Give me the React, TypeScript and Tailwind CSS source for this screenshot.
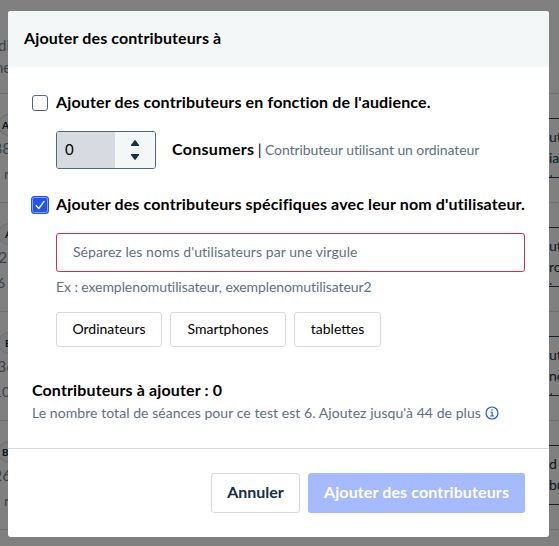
const tableRows = [
  { badge: 'A', badgePad: 'pl-[3px]', badgeEdge: '-ml-0.5', count: '38', countPad: '-ml-[7px]', note: 'r', notePad: 'pl-1', lines: ['ute', 'iau', 'tu'] },
  { badge: 'A', badgePad: 'pl-[6px]', badgeEdge: '-ml-0.5', count: '28', countPad: '-ml-0.5', note: '6', notePad: '-ml-[3px]', lines: ['ute', 'rou', 'i'] },
  { badge: 'B', badgePad: 'pl-[6px]', badgeEdge: '-ml-0.5', count: '36', countPad: '-ml-[3px]', note: '10', notePad: '-ml-1.5', lines: ['ute', 'nou', 'tu'] },
  { badge: 'B', badgePad: 'pl-[3px]', badgeEdge: '-ml-0.5', count: '26', countPad: '-ml-[7px]', note: 'r', notePad: 'pl-1', lines: ['d c', 'bu', ''] },
]

function TablePage() {
  return (
    <div className="h-full overflow-hidden bg-[#808080] text-[#3a444f]">
      <div className="h-[93px] pt-[34px] text-[15px] leading-[22px]">
        <div className="-ml-0.5">di</div>
        <div className="-ml-[5px]">ne</div>
      </div>
      {tableRows.map((row, index) => (
        <div key={index} className="flex h-[109px] justify-between border-t border-[#6c6d70]">
          <div className="w-2 overflow-hidden whitespace-nowrap pt-5">
            <div className={`h-[22px] w-10 rounded-full border border-[#6c6d70] bg-[#7a7c7e] ${row.badgeEdge}`}>
              <div className={`text-[10px] font-black leading-5 text-[#0c1722] ${row.badgePad}`}>{row.badge}</div>
            </div>
            <div className={`text-base leading-6 ${row.countPad}`}>{row.count}</div>
            <div className={`pt-1 text-sm leading-5 ${row.notePad}`}>{row.note}</div>
          </div>
          <div className="w-2.5 overflow-hidden whitespace-nowrap pt-6">
            <div className="h-[60px] w-5 overflow-hidden border-y border-[#17212d] pt-[7px] text-sm leading-[21px] text-[#0c1722]">
              {row.lines.map((line) => (
                <div key={line}>{line}</div>
              ))}
            </div>
          </div>
        </div>
      ))}
      <div className="border-t border-[#6c6d70]" />
    </div>
  )
}

function CheckIcon() {
  return (
    <svg className="size-[18px] shrink-0" viewBox="0 0 18 18" fill="none">
      <rect width="18" height="18" rx="3.5" fill="#2152f5" />
      <rect x="1.5" y="1.5" width="15" height="15" rx="2" stroke="#8ba4fb" />
      <path d="M5.2 9.6 7.8 12.6 13 5.4" stroke="#fff" strokeWidth="1.4" strokeLinecap="round" strokeLinejoin="round" />
    </svg>
  )
}

function InfoIcon() {
  return (
    <svg className="size-3.5 text-[#2152f5]" viewBox="0 0 14 14" fill="none" stroke="currentColor">
      <circle cx="7" cy="7" r="6" strokeWidth="1.2" />
      <path d="M5.6 6.2H7.2V10M5.3 10H8.9" strokeWidth="1.1" />
      <circle cx="7" cy="4" r=".8" fill="currentColor" stroke="none" />
    </svg>
  )
}

function NumberStepper() {
  return (
    <div className="flex h-[38px] w-[100px] overflow-hidden rounded-[3px] border border-[#536480]">
      <div className="flex w-[58px] items-center bg-[#d7dae0] pb-px pl-2 text-[15px]">0</div>
      <div className="flex flex-1 flex-col items-center justify-center gap-2 bg-[#f3f7f8] text-[#16304a]">
        <svg className="h-1.5 w-2" viewBox="0 0 8 6" fill="currentColor">
          <path d="M3.4.4a.8.8 0 0 1 1.2 0L8 5v1H0V5z" />
        </svg>
        <svg className="h-1.5 w-2" viewBox="0 0 8 6" fill="currentColor">
          <path d="M3.4 5.6a.8.8 0 0 0 1.2 0L8 1V0H0v1z" />
        </svg>
      </div>
    </div>
  )
}

function DeviceButton({ label, width }: { label: string; width: string }) {
  return (
    <button type="button" className={`h-[35px] rounded-[3px] border border-[#d7dae0] pb-0.5 text-sm ${width}`}>
      {label}
    </button>
  )
}

function ContributorsModal() {
  return (
    <div className="absolute left-2 top-[11px] flex h-[526px] w-[541px] flex-col overflow-hidden rounded-[3px] bg-white text-black">
      <header className="flex h-14 items-center bg-[#f3f7f8] px-4 pb-0.5">
        <h2 className="text-base font-bold tracking-[0.12px]">Ajouter des contributeurs à</h2>
      </header>

      <div className="flex flex-1 flex-col px-6 pt-6">
        <label className="flex h-6 items-center gap-2">
          <span className="size-4 rounded-[3px] border border-[#536480]" />
          <span className="whitespace-nowrap pb-0.5 text-base font-bold tracking-[0.14px]">
            Ajouter des contributeurs en fonction de l'audience.
          </span>
        </label>

        <div className="mt-4 flex items-center gap-4 pl-6">
          <NumberStepper />
          <div className="whitespace-nowrap pb-0.5 text-sm tracking-[-0.1px] text-[#5f6f85]">
            <span className="text-base font-bold tracking-[0.3px] text-black">Consumers</span>{' '}
            <span className="text-[15px] text-black">|</span> Contributeur utilisant un ordinateur
          </div>
        </div>

        <label className="mt-6 flex h-6 items-center gap-[7px]">
          <span className="-ml-px">
            <CheckIcon />
          </span>
          <span className="whitespace-nowrap pb-0.5 text-base font-bold tracking-[0.14px]">
            Ajouter des contributeurs spécifiques avec leur nom d'utilisateur.
          </span>
        </label>

        <div className="mt-4 pl-6">
          <div className="flex h-[39px] items-center rounded-[3px] border border-[#db2a4a] px-4 pb-0.5 text-sm tracking-[0.07px] text-[#5f6f85]">
            Séparez les noms d'utilisateurs par une virgule
          </div>
          <p className="mt-[5px] text-sm leading-5 tracking-[-0.08px] text-[#5f6f85]">
            Ex : exemplenomutilisateur, exemplenomutilisateur2
          </p>
          <div className="mt-[15px] flex gap-2">
            <DeviceButton label="Ordinateurs" width="w-[106px]" />
            <DeviceButton label="Smartphones" width="w-[116px]" />
            <DeviceButton label="tablettes" width="w-[87px]" />
          </div>
        </div>

        <div className="mt-[31px] text-base font-bold leading-6 tracking-[0.13px]">Contributeurs à ajouter : 0</div>
        <div className="flex items-center gap-1 whitespace-nowrap text-sm leading-[22px] tracking-[0.06px] text-[#5f6f85]">
          Le nombre total de séances pour ce test est 6. Ajoutez jusqu'à 44 de plus
          <InfoIcon />
        </div>
      </div>

      <footer className="flex h-[89px] items-start justify-end gap-2 border-t border-[#d7dae0] px-6 pt-6">
        <button type="button" className="h-10 w-[89px] rounded-[3px] border border-[#d7dae0] pb-0.5 text-base font-bold text-[#16304a]">
          Annuler
        </button>
        <button
          type="button"
          className="h-10 w-[217px] whitespace-nowrap rounded-[3px] bg-[#a6baff] pb-0.5 text-base font-bold tracking-[0.12px] text-white"
        >
          Ajouter des contributeurs
        </button>
      </footer>
    </div>
  )
}

export default function App() {
  return (
    <div className="relative h-[546px] w-[559px] overflow-hidden font-['Lato',sans-serif]">
      <TablePage />
      <ContributorsModal />
    </div>
  )
}
